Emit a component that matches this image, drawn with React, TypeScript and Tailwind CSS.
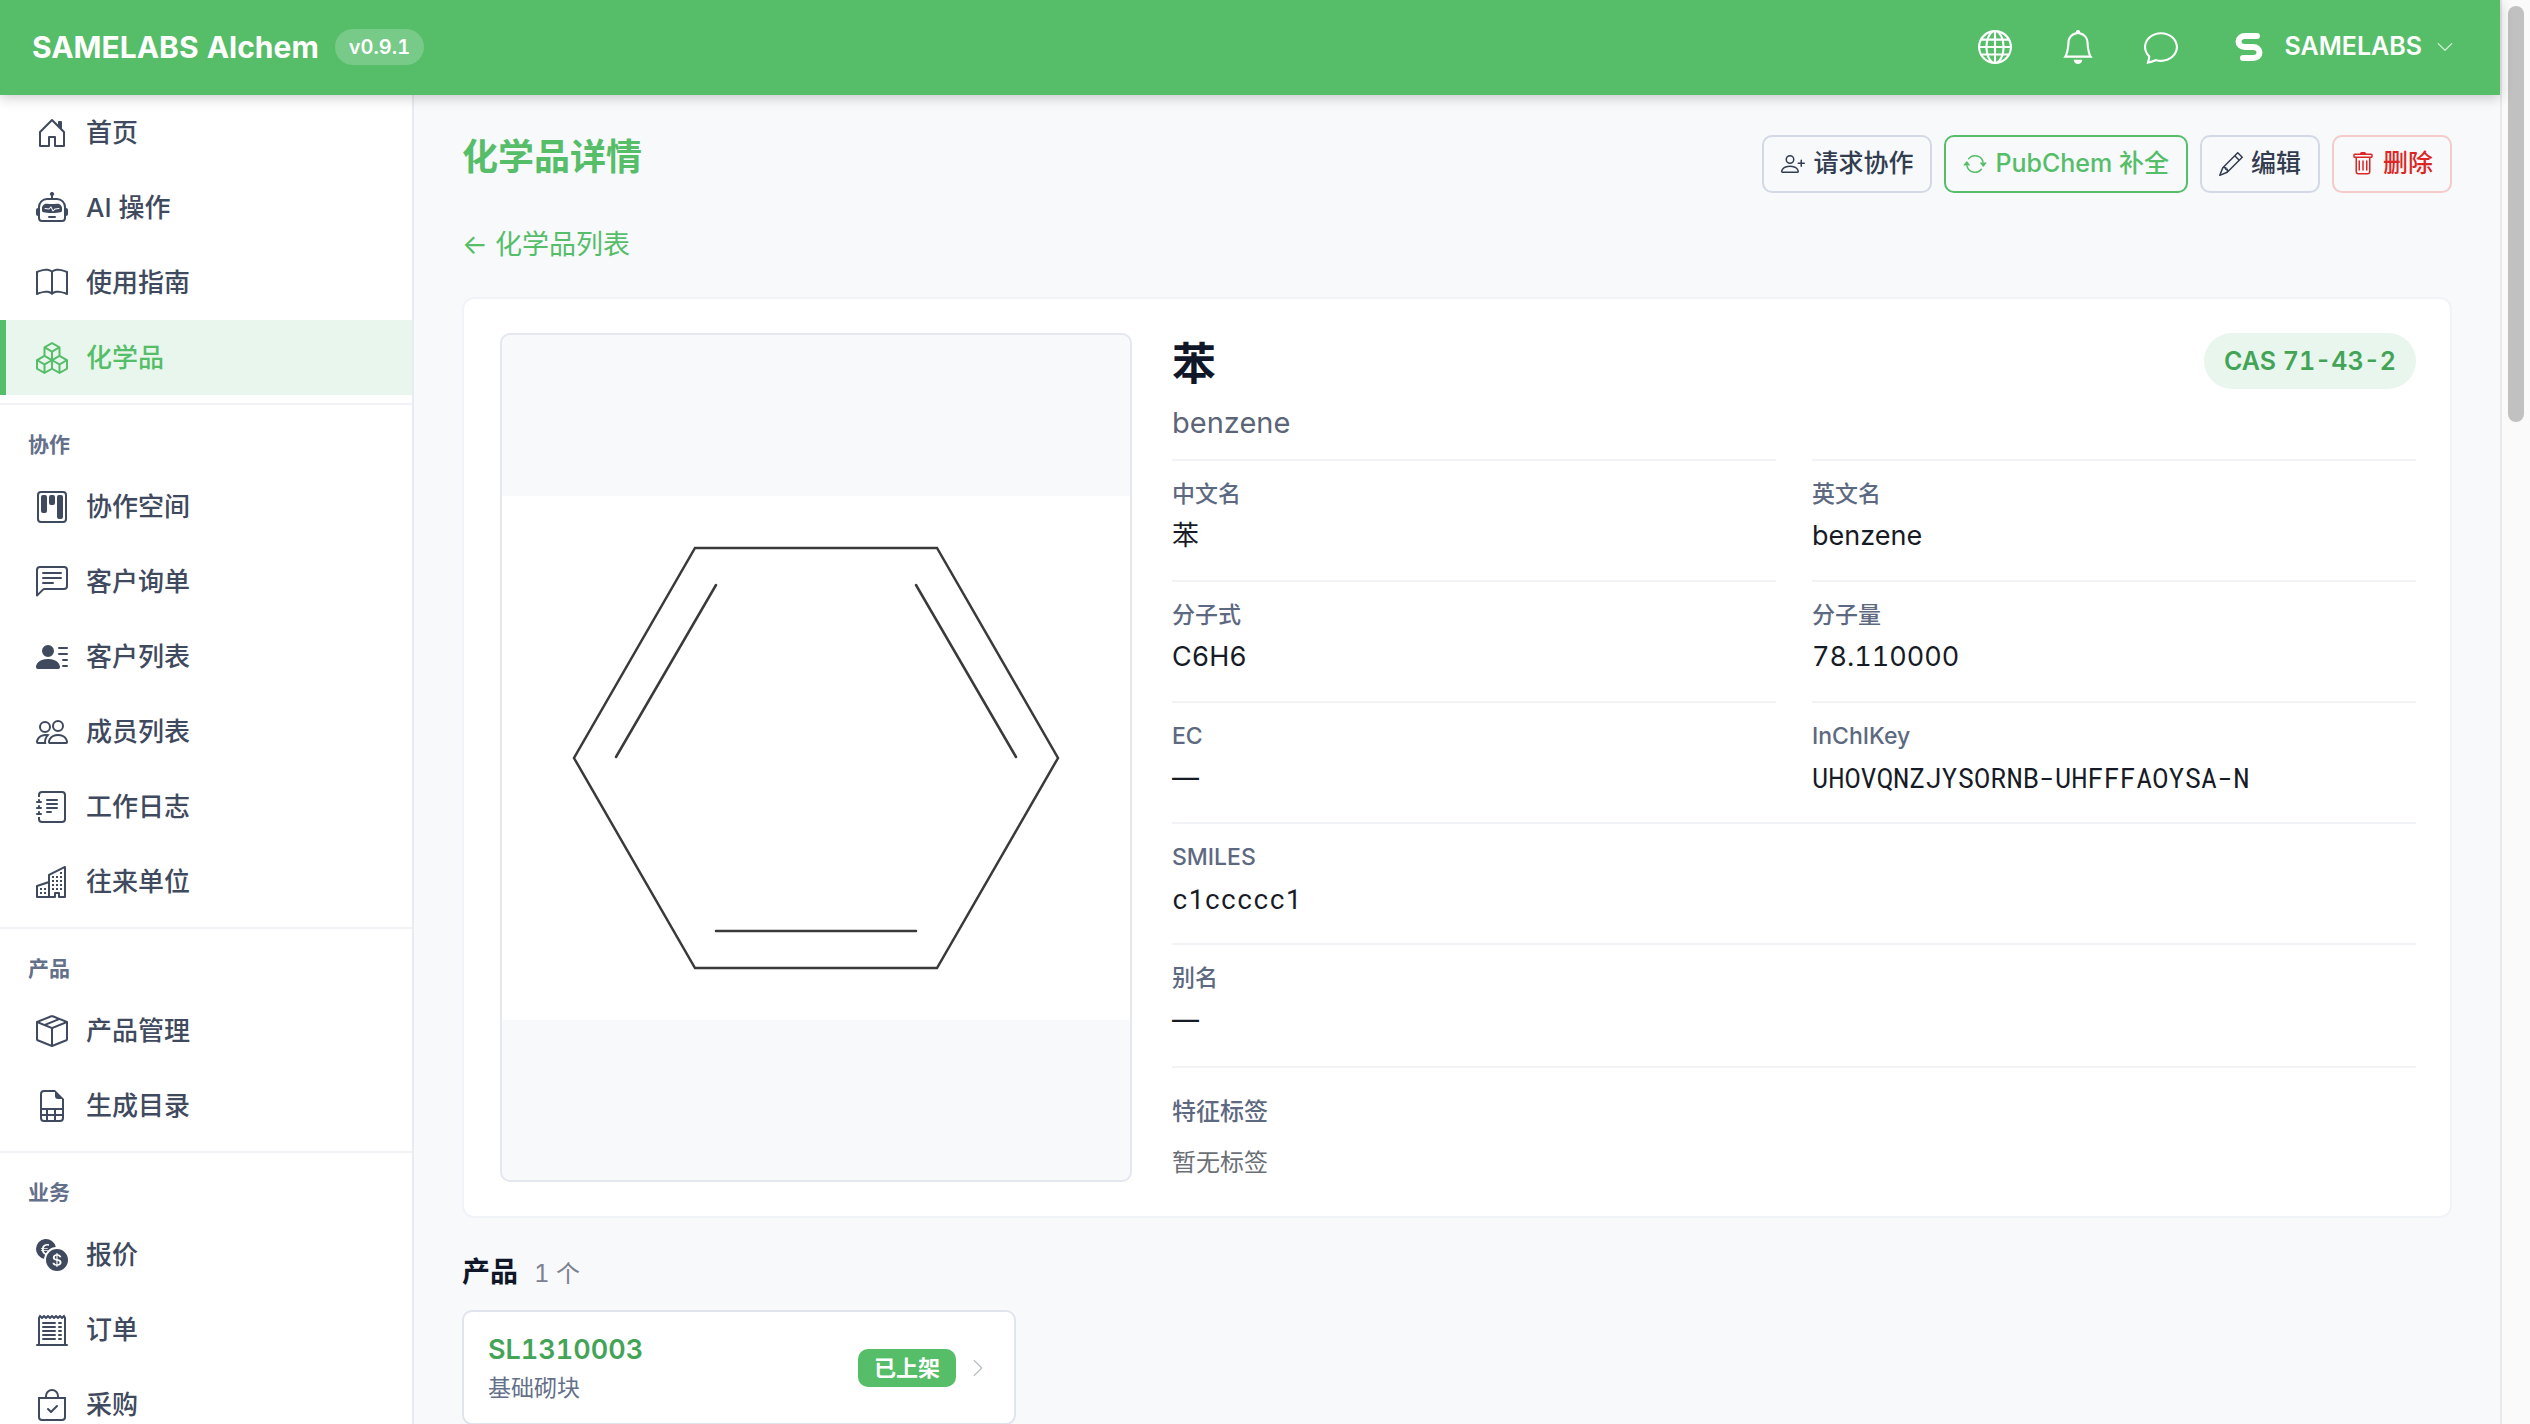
import React from "react";
import {
  BsHouseDoor, BsRobot, BsBook, BsBoxes, BsKanban, BsChatLeftText, BsPersonLinesFill, BsPeople,
  BsJournalText, BsBuildings, BsBoxSeam, BsFileEarmarkSpreadsheet, BsCurrencyExchange, BsReceiptCutoff,
  BsBagCheck, BsGlobe, BsBell, BsChat, BsPersonPlus, BsArrowRepeat, BsPencil, BsTrash,
  BsChevronDown, BsChevronRight,
} from "react-icons/bs";
import type { IconType } from "react-icons";

type Item = { label: string; icon: IconType; active?: boolean };
type Group = { title?: string; items: Item[] };

const groups: Group[] = [
  {
    items: [
      { label: "首页", icon: BsHouseDoor },
      { label: "AI 操作", icon: BsRobot },
      { label: "使用指南", icon: BsBook },
      { label: "化学品", icon: BsBoxes, active: true },
    ],
  },
  {
    title: "协作",
    items: [
      { label: "协作空间", icon: BsKanban },
      { label: "客户询单", icon: BsChatLeftText },
      { label: "客户列表", icon: BsPersonLinesFill },
      { label: "成员列表", icon: BsPeople },
      { label: "工作日志", icon: BsJournalText },
      { label: "往来单位", icon: BsBuildings },
    ],
  },
  {
    title: "产品",
    items: [
      { label: "产品管理", icon: BsBoxSeam },
      { label: "生成目录", icon: BsFileEarmarkSpreadsheet },
    ],
  },
  {
    title: "业务",
    items: [
      { label: "报价", icon: BsCurrencyExchange },
      { label: "订单", icon: BsReceiptCutoff },
      { label: "采购", icon: BsBagCheck },
    ],
  },
];

function Sidebar() {
  return (
    <nav className="w-[414px] shrink-0 overflow-hidden border-r-2 border-[#e8ebf1] bg-white">
      {groups.map((g, i) => (
        <div key={i} className={i === 0 ? "" : "mt-2 border-t-2 border-[#f1f3f7]"}>
          {g.title && <h2 className="px-7 pt-[26px] pb-[10px] text-[21px] leading-7 font-semibold text-[#64708a]">{g.title}</h2>}
          <ul>
            {g.items.map(({ label, icon: Icon, active }) => (
              <li key={label}>
                <a
                  href="#"
                  className={
                    active
                      ? "flex h-[75px] items-center gap-[18px] border-l-6 border-[#56bd69] bg-[#e9f6ed] pl-[30px] text-[26px] font-medium text-[#56bd69]"
                      : "flex h-[75px] items-center gap-[18px] border-l-6 border-transparent pl-[30px] text-[26px] font-medium text-[#3f4a5e]"
                  }
                >
                  <Icon className="size-8" />
                  {label}
                </a>
              </li>
            ))}
          </ul>
        </div>
      ))}
    </nav>
  );
}

function Logo() {
  return (
    <svg viewBox="0 0 28 30" className="h-[30px] w-7" fill="none" stroke="currentColor">
      <path
        d="M22 4H10C6 4 3.500 6.500 3.500 9.500C3.500 13 6 15 10 15H18C22 15 24.500 17.500 24.500 20.500C24.500 24 22 26 18 26H8"
        strokeWidth="6"
        strokeLinejoin="round"
        strokeLinecap="round"
      />
    </svg>
  );
}

function Header() {
  return (
    <header className="relative z-10 flex h-[95px] shrink-0 items-center justify-between bg-[#56bd69] pr-[46px] pb-px pl-8 text-white shadow-[0_3px_12px_rgba(0,0,0,0.2)]">
      <div className="flex items-center gap-4">
        <span className="text-[30px] font-bold">SAMELABS Alchem</span>
        <span className="rounded-full bg-white/20 px-[14px] py-1 text-[20px] leading-7 font-semibold">v0.9.1</span>
      </div>
      <div className="flex items-center">
        <button aria-label="语言" className="mr-[49px]"><BsGlobe className="size-[34px]" /></button>
        <button aria-label="通知" className="mr-[49px]"><BsBell className="size-[34px]" /></button>
        <button aria-label="消息" className="mr-[57px]"><BsChat className="size-[34px]" /></button>
        <button className="flex items-center text-[25px] font-semibold">
          <Logo />
          <span className="ml-[22px]">SAMELABS</span>
          <BsChevronDown className="ml-[14px] size-[18px] opacity-80" />
        </button>
      </div>
    </header>
  );
}

function Field({ label, value, wide, mono }: { label: string; value: string; wide?: boolean; mono?: boolean }) {
  return (
    <div className={wide ? "col-span-2 h-[121px] border-t-2 border-[#f1f3f7] pt-[15px]" : "h-[121px] border-t-2 border-[#f1f3f7] pt-[15px]"}>
      <dt className="text-[23px] leading-9 font-medium text-[#5d6980]">{label}</dt>
      <dd
        className={
          mono
            ? "mt-1 font-['Roboto_Mono','Liberation_Mono','Noto_Sans_CJK_SC',monospace] text-[27px] leading-10 text-[#161b26]"
            : "mt-1 text-[27px] leading-10 text-[#161b26]"
        }
      >
        {value}
      </dd>
    </div>
  );
}

function Benzene() {
  return (
    <svg viewBox="0 0 628 524" className="w-full bg-white" fill="none" stroke="#3a3a3a" strokeWidth="2.500" strokeLinecap="round">
      <path d="M193 52H435L556 262L435 472H193L72 262Z" />
      <path d="M214 89L114 261M414 89L514 261M214 435H414" />
    </svg>
  );
}

const outline = "flex h-[58px] items-center gap-2 rounded-[10px] border-2 px-[17px] text-[25px] font-medium";

export default function App() {
  return (
    <div className="flex h-screen overflow-hidden bg-[#f7f9fb] font-['Inter','Noto_Sans_CJK_SC',sans-serif] tabular-nums">
      <div className="flex min-w-0 grow flex-col">
        <Header />
        <div className="flex min-h-0 grow">
          <Sidebar />
          <main className="min-w-0 grow overflow-hidden px-12 pt-10">
            <div className="flex items-start justify-between">
              <h1 className="text-[36px] leading-[44px] font-bold text-[#56bd69]">化学品详情</h1>
              <div className="flex gap-3">
                <button className={`${outline} border-[#d3d9e4] text-[#333d50]`}><BsPersonPlus className="size-6" />请求协作</button>
                <button className={`${outline} border-[#56bd69] text-[#56bd69]`}><BsArrowRepeat className="size-6" />PubChem 补全</button>
                <button className={`${outline} border-[#d3d9e4] text-[#333d50]`}><BsPencil className="size-6" />编辑</button>
                <button className={`${outline} border-[#f6caca] text-[#dc2626]`}><BsTrash className="size-6" />删除</button>
              </div>
            </div>
            <a href="#" className="mt-8 inline-block text-[27px] leading-10 text-[#56bd69]">← 化学品列表</a>

            <section className="mt-8 flex gap-10 rounded-xl border-2 border-[#f0f3f7] bg-white py-[34px] pr-[34px] pl-9">
              <div className="flex w-[632px] shrink-0 items-center rounded-[10px] border-2 border-[#e4e8ee] bg-[#f7f9fb]">
                <Benzene />
              </div>
              <div className="min-w-0 grow">
                <div className="flex items-start justify-between">
                  <div>
                    <h2 className="text-[44px] leading-[62px] font-bold text-[#0f1729]">苯</h2>
                    <p className="mt-2 text-[29px] leading-10 text-[#5b6577]">benzene</p>
                  </div>
                  <span className="rounded-full bg-[#e9f6ed] px-5 py-2 text-[25px] leading-10 font-semibold text-[#43a457]">CAS 71-43-2</span>
                </div>
                <dl className="mt-4 grid grid-cols-2 gap-x-9">
                  <Field label="中文名" value="苯" />
                  <Field label="英文名" value="benzene" />
                  <Field label="分子式" value="C6H6" />
                  <Field label="分子量" value="78.110000" />
                  <Field label="EC" value="—" />
                  <Field label="InChIKey" value="UHOVQNZJYSORNB-UHFFFAOYSA-N" mono />
                  <Field label="SMILES" value="c1ccccc1" wide mono />
                  <Field label="别名" value="—" wide />
                </dl>
                <div className="mt-0.5 border-t-2 border-[#f1f3f7] pt-6">
                  <h3 className="text-[24px] leading-10 font-medium text-[#5d6980]">特征标签</h3>
                  <p className="mt-3 text-[24px] leading-[38px] text-[#6b6f76]">暂无标签</p>
                </div>
              </div>
            </section>

            <section className="mt-8">
              <div className="flex items-baseline gap-4">
                <h2 className="text-[28px] leading-[44px] font-bold text-[#0f1729]">产品</h2>
                <span className="text-[24px] text-[#7b8190]">1 个</span>
              </div>
              <a href="#" className="mt-4 flex h-[115px] w-[554px] items-center rounded-[10px] border-2 border-[#e0e4ec] bg-white pr-[26px] pl-6">
                <div className="grow">
                  <div className="text-[27px] leading-10 font-semibold text-[#43a457]">SL1310003</div>
                  <div className="text-[23px] leading-9 text-[#64708a]">基础砌块</div>
                </div>
                <span className="rounded-[10px] bg-[#56bd69] px-4 text-[22px] leading-[38px] font-bold text-white">已上架</span>
                <BsChevronRight className="ml-3 size-5 text-[#b9bec8]" />
              </a>
            </section>
          </main>
        </div>
      </div>
      <div className="w-[30px] shrink-0 border-l-2 border-[#e9e9e9] bg-[#fafafa] px-[6px] pt-[6px]">
        <div className="h-[416px] rounded-full bg-[#c1c1c1]" />
      </div>
    </div>
  );
}
